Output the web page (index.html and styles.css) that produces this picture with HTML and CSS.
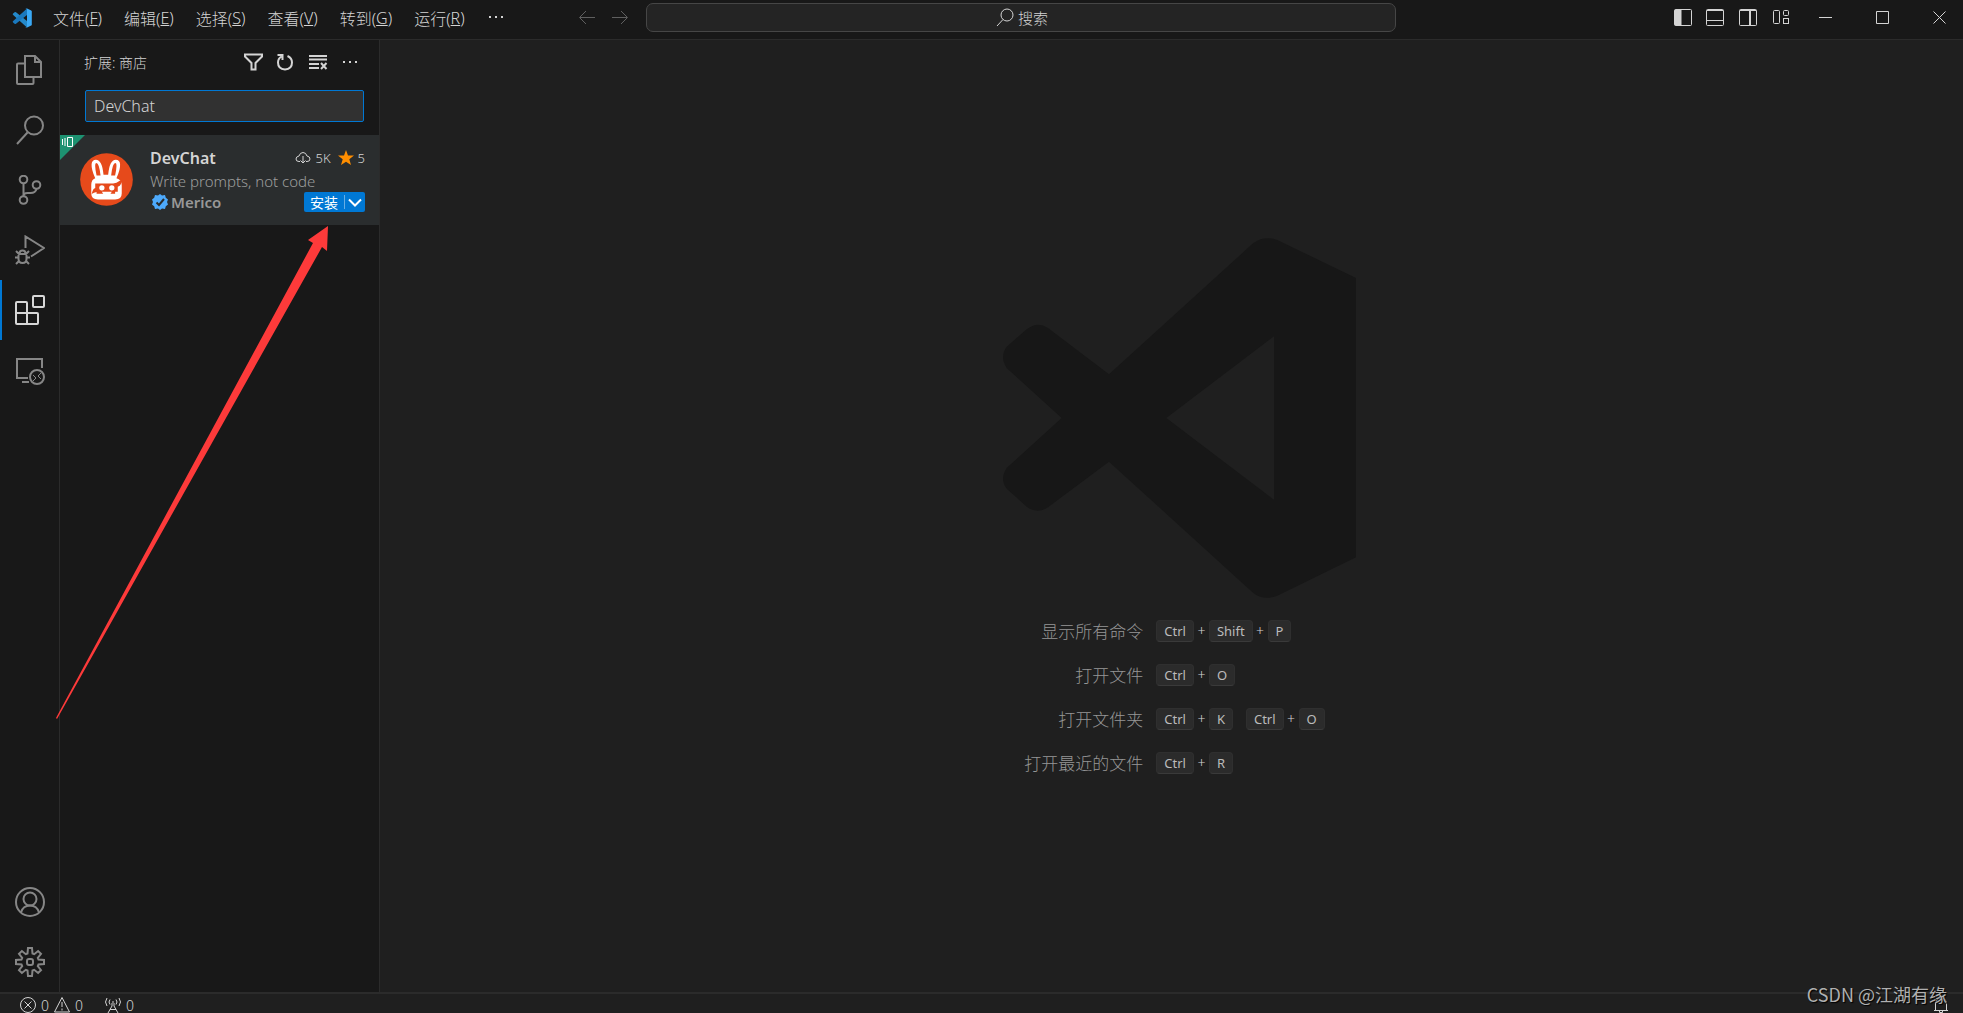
FILE: index.html
```html
<!DOCTYPE html>
<html lang="zh-CN">
<head>
    <meta charset="UTF-8">
    <meta name="viewport" content="width=device-width, initial-scale=1.0">
    <title>Visual Studio Code</title>
    <link rel="stylesheet" href="styles.css">
</head>
<body>
    <header class="titlebar">
        <div class="titlebar-left">
            <svg class="app-logo" width="20" height="20" viewBox="0 0 20 20">
                <path fill="#2489ca" d="M1.4 5.2 2.6 4.2q.7-.5 1.4 0L15 13v6.6L.9 6.8q-.6-.8.5-1.6z"/>
                <path fill="#1a78bd" d="M1.4 14.8l1.2 1q.7.5 1.4 0L15 7V.4L.9 13.2q-.6.8.5 1.6z"/>
                <path fill="#3aa9f5" d="M14.6.3 19.2 2.4q.6.3.6.9V16.7q0 .6-.6.9L14.6 19.7q-.8.2-1.4-.5 1.8 1 1.8-1V1.8q0-2-1.8-1Q13.8 0 14.6.3z"/>
            </svg>
            <nav class="menu">
                <button>文件(<u>F</u>)</button>
                <button>编辑(<u>E</u>)</button>
                <button>选择(<u>S</u>)</button>
                <button>查看(<u>V</u>)</button>
                <button>转到(<u>G</u>)</button>
                <button>运行(<u>R</u>)</button>
                <button aria-label="更多">
                    <svg width="20" height="20" viewBox="0 0 20 20"><path d="M2 8h2v2H2zM8 8h2v2H8zM14 8h2v2h-2z"/></svg>
                </button>
            </nav>
        </div>
        <div class="titlebar-center">
            <div class="history">
                <button aria-label="后退"><svg width="20" height="20" viewBox="0 0 20 20"><path d="M18 9.5H3M9 3 2.5 9.500 9 16"/></svg></button>
                <button aria-label="前进"><svg width="20" height="20" viewBox="0 0 20 20"><path d="M3 9.5h15M12 3l6.5 6.5L12 16"/></svg></button>
            </div>
            <button class="command-center">
                <svg width="20" height="20" viewBox="0 0 20 20"><circle cx="13" cy="7" r="6"/><path d="M9 11.5l-6 6.5"/></svg>
                搜索
            </button>
        </div>
        <div class="titlebar-right">
            <div class="layout-actions">
                <button aria-label="切换主侧栏"><svg width="20" height="20" viewBox="0 0 20 20"><rect x="2.5" y="1.5" width="17" height="16" rx="1"/><path fill="currentColor" d="M3 2h6v15H3z"/></svg></button>
                <button aria-label="切换面板"><svg width="20" height="20" viewBox="0 0 20 20"><rect x="1.5" y="1.5" width="17" height="16" rx="1"/><path d="M2 12.5h16M2 2.5h16"/></svg></button>
                <button aria-label="切换辅助侧栏"><svg width="20" height="20" viewBox="0 0 20 20"><rect x="1.5" y="1.5" width="17" height="16" rx="1"/><path d="M11.5 2v15M12.5 2v15M2 2.5h16"/></svg></button>
                <button aria-label="自定义布局"><svg width="20" height="20" viewBox="0 0 20 20"><rect x="2.5" y="2.5" width="6" height="13" rx="1"/><rect x="12.5" y="2.5" width="5" height="5" rx="1"/><rect x="12.5" y="10.5" width="5" height="5"/></svg></button>
            </div>
            <div class="window-controls">
                <button aria-label="最小化"><svg width="14" height="14" viewBox="0 0 14 14"><path d="M0 6.5h13"/></svg></button>
                <button aria-label="最大化"><svg width="14" height="14" viewBox="0 0 14 14"><path d="M.5.5h12v12H.5z"/></svg></button>
                <button aria-label="关闭"><svg width="14" height="14" viewBox="0 0 14 14"><path d="M.5.5l12 12M12.5.5l-12 12"/></svg></button>
            </div>
        </div>
    </header>

    <div class="workbench">
        <nav class="activitybar">
            <button aria-label="资源管理器"><svg width="30" height="30" viewBox="0 0 30 30"><path d="M10 1h10l6 6v15H10zM20 1v6h6M10 8.5H3q-1 0-1 1V28q0 1 1 1h14.5q1 0 1-1v-6"/></svg></button>
            <button aria-label="搜索"><svg width="30" height="30" viewBox="0 0 30 30"><circle cx="19" cy="10.5" r="9"/><path d="M12.5 17.5 2 29"/></svg></button>
            <button aria-label="源代码管理"><svg width="30" height="30" viewBox="0 0 30 30"><circle cx="8.5" cy="4.5" r="3.8"/><circle cx="21.5" cy="10" r="3.8"/><circle cx="8.5" cy="25" r="3.8"/><path d="M8.5 8.5v12.5M21.5 14q-1 4-6 4h-3q-4 0-4 3"/></svg></button>
            <button aria-label="运行和调试"><svg width="30" height="30" viewBox="0 0 30 30"><path d="M10.5 13V1.5L29 13 16 21.5M3.5 19h8M4.5 18.5q0-3 3-3t3 3M3.5 20v4q0 4 4 4t4-4v-4M1 16l3 3M14 16l-3 3M0 22.5h3.5M11.5 22.5H15M1 29l3-3M14 29l-3-3"/></svg></button>
            <button class="active" aria-label="扩展"><svg width="30" height="30" viewBox="0 0 30 30"><path d="M2 7h9q1 0 1 1v10h10q1 0 1 1v9q0 1-1 1H2q-1 0-1-1V8q0-1 1-1zM1 18h11v11"/><rect x="18" y="1" width="11" height="11" rx="1"/></svg></button>
            <button aria-label="远程资源管理器"><svg width="30" height="30" viewBox="0 0 30 30"><path d="M27 13V4H2v19h11M7 27h7"/><circle cx="22" cy="22" r="7"/><path class="thin" d="M18 20l3 3-3 3M26 18l-3 3 3 3"/></svg></button>
            <div class="spacer"></div>
            <button aria-label="账户"><svg width="30" height="30" viewBox="0 0 30 30"><circle cx="15" cy="15" r="14"/><circle cx="15" cy="12" r="6.5"/><path d="M6 25.5q2-7 9-7t9 7"/></svg></button>
            <button aria-label="管理"><svg width="30" height="30" viewBox="0 0 30 30"><path d="M12.5 6.5 13 1H17L17.5 6.5 19.2 7.2 23.1 4 26 6.9 22.8 10.8 23.5 12.5 29 13V17L23.5 17.5 22.8 19.2 26 23.1 23.1 26 19.2 22.8 17.5 23.5 17 29H13L12.5 23.5 10.8 22.8 6.9 26 4 23.1 7.2 19.2 6.5 17.5 1 17V13L6.5 12.5 7.2 10.8 4 6.9 6.9 4 10.8 7.2z"/><rect x="12" y="12" width="6" height="6" rx="2"/></svg></button>
        </nav>

        <aside class="sidebar">
            <div class="sidebar-header">
                <h2>扩展: 商店</h2>
                <div class="sidebar-actions">
                    <button aria-label="筛选器"><svg width="20" height="20" viewBox="0 0 20 20"><path d="M1 2.5h17v2L11.5 11v6.500h-4V11L1 4.5z"/></svg></button>
                    <button aria-label="刷新"><svg width="20" height="20" viewBox="0 0 20 20"><path d="M5.5 4.5Q2 6.5 2 10.5q0 6.500 7 7 7-.5 7-7 0-4.500-4.500-6.500M1.5 3h5v5"/></svg></button>
                    <button aria-label="清除"><svg width="20" height="20" viewBox="0 0 20 20"><path d="M1 4h18M1 7.5h18M1 12h10M1 16h10M13 11l5.500 6M18.5 11 13 17"/></svg></button>
                    <button aria-label="更多操作"><svg width="20" height="20" viewBox="0 0 20 20"><path class="solid" d="M3 9h2v2H3zM9 9h2v2H9zM15 9h2v2h-2z"/></svg></button>
                </div>
            </div>
            <input class="extension-search" type="text" value="DevChat" aria-label="在应用商店中搜索扩展">

            <article class="extension">
                <div class="extension-badge">
                    <svg width="12" height="12" viewBox="0 0 12 12"><path d="M.5 3v6M3 2v8M5.5 1.5h5v9h-5z"/></svg>
                </div>
                <svg class="extension-icon" width="53" height="53" viewBox="0 0 160 160">
                    <circle cx="80" cy="80" r="79.5" fill="#e64a1b"/>
                    <path fill="#fff" d="M46 76Q34 50 35 34q1-14 13-14 19 0 23 46h14q4-46 23-46 12 0 13 14 1 16-11 42 16 4 16 22v24q0 18-20 18H54q-20 0-20-18V96q0-16 12-20z"/>
                    <path fill="#e64a1b" d="M50 68Q42 30 49 30q9 0 13 38zM94 68q4-38 13-38 7 0-1 38zM46 92h54q10 0 20-8l7-3-3 12q-3 7-10 9v15h-8v6H50v-5q-8 1-15 6l3-9q2-7 8-9z"/>
                    <circle cx="66" cy="105" r="8" fill="#fff"/>
                    <circle cx="96" cy="105" r="8" fill="#fff"/>
                    <path fill="#fff" d="M66 117h30l-4 7H70z"/>
                </svg>
                <div class="extension-details">
                    <div class="extension-row">
                        <h3>DevChat</h3>
                        <div class="extension-stats">
                            <svg width="16" height="16" viewBox="0 0 16 16"><path d="M5 11.5H4q-3 0-3-2.5 0-2.500 3-3 1-3.500 4-3.500t4 3.500q3 .5 3 3 0 2.500-3 2.500h-1M8 6v7M5.5 10.5 8 13l2.500-2.500"/></svg>
                            <span>5K</span>
                            <svg width="16" height="16" viewBox="0 0 16 16"><path class="star" d="M8 0l2 5.500h6l-4.700 3.800L13 15 8 11.700 3 15l1.700-5.700L0 5.500h6z"/></svg>
                            <span>5</span>
                        </div>
                    </div>
                    <p>Write prompts, not code</p>
                    <div class="extension-row">
                        <div class="publisher">
                            <svg width="18" height="18" viewBox="0 0 18 18"><path fill="#4daafc" d="M9 1l2 1.500 3-.5.8 2.700L17 6.500 16 9l1 2.500-2.200 1.800L14 16l-3-.5L9 17l-2-1.500L4 16l-.8-2.700L1 11.500 2 9 1 6.500l2.200-1.800L4 2l3 .5z"/><path fill="none" stroke="#2a2d2e" stroke-width="2" d="M5.5 9.5 8 12l5-6"/></svg>
                            <span>Merico</span>
                        </div>
                        <div class="install">
                            <button>安装</button>
                            <button class="install-more" aria-label="更多安装选项"><svg width="14" height="14" viewBox="0 0 14 14"><path d="M1 4.5l6 6 6-6"/></svg></button>
                        </div>
                    </div>
                </div>
            </article>
        </aside>

        <main class="editor">
            <svg class="letterpress" width="384" height="360" viewBox="0 84 1152 1080">
                <path fill="#171717" fill-rule="evenodd" d="M819 100Q850 75 892 90L1128 204V1042L892 1157Q850 1173 819 1148L387 755 204 892Q172 914 140 890L80 836Q58 808 80 774L245 624 80 474Q58 440 80 410L140 358Q172 332 204 354L387 493zM559 624 882 869V379z"/>
            </svg>
            <dl class="shortcuts">
                <dt>显示所有命令</dt>
                <dd><kbd>Ctrl</kbd><span>+</span><kbd>Shift</kbd><span>+</span><kbd>P</kbd></dd>
                <dt>打开文件</dt>
                <dd><kbd>Ctrl</kbd><span>+</span><kbd>O</kbd></dd>
                <dt>打开文件夹</dt>
                <dd><kbd>Ctrl</kbd><span>+</span><kbd>K</kbd><kbd class="chord">Ctrl</kbd><span>+</span><kbd>O</kbd></dd>
                <dt>打开最近的文件</dt>
                <dd><kbd>Ctrl</kbd><span>+</span><kbd>R</kbd></dd>
            </dl>
        </main>
    </div>

    <footer class="statusbar">
        <button class="problems">
            <svg width="18" height="18" viewBox="0 0 18 18"><circle cx="9" cy="9" r="7.5"/><path d="M5.5 5.5l7 7M12.5 5.5l-7 7"/></svg>
            0
            <svg width="18" height="18" viewBox="0 0 18 18"><path d="M9 1.5l7.5 14.5h-15zM9 6v5M9 12.5v2"/></svg>
            0
        </button>
        <button class="ports">
            <svg width="18" height="18" viewBox="0 0 18 18"><path d="M3 2q-3 4 0 8M6 3.5q-2 2.500 0 5M15 2q3 4 0 8M12 3.5q2 2.500 0 5M8 7v3l-4 7M10 7v3l4 7M8 6h2M6 13.5h6"/></svg>
            0
        </button>
        <button class="bell" aria-label="通知">
            <svg width="18" height="18" viewBox="0 0 18 18"><path d="M2 14.5h14M3.5 14V8Q4 2.5 9 2t5.500 6v6M7.5 15v1.500h3V15"/></svg>
        </button>
    </footer>

    <svg class="pointer-arrow" width="276" height="496" viewBox="0 0 276 496">
        <path fill="#fd3a3a" d="M272 1 271 26 266 22 1 494 0 493 257 18 252 15z"/>
    </svg>
    <div class="watermark">CSDN @江湖有缘</div>
</body>
</html>
```
FILE: styles.css
```css
* {
    box-sizing: border-box;
}

body {
    margin: 0;
    height: 100vh;
    display: flex;
    flex-direction: column;
    overflow: hidden;
    background-color: #181818;
    color: #d4d4d4;
    font-family: "Noto Sans", "Noto Sans CJK SC", sans-serif;
    font-size: 16px;
    font-weight: 300;
}

button {
    display: flex;
    align-items: center;
    justify-content: center;
    padding: 0;
    border: none;
    background: none;
    color: inherit;
    font: inherit;
    cursor: pointer;
}

svg {
    flex-shrink: 0;
}

button svg {
    fill: none;
    stroke: currentColor;
}

h2, h3, p, dl, dd {
    margin: 0;
}

/* Title bar */
.titlebar {
    display: flex;
    flex: 0 0 40px;
    border-bottom: 1px solid #2b2b2b;
}

.titlebar-left,
.titlebar-right {
    flex: 1 1 0;
    display: flex;
    align-items: center;
    min-width: 0;
    padding-bottom: 4px;
}

.titlebar-right {
    justify-content: flex-end;
}

.app-logo {
    margin: 0 10px 0 12px;
}

.menu {
    display: flex;
}

.menu button {
    height: 32px;
    padding: 0 11px;
}

.menu svg {
    fill: currentColor;
    stroke: none;
}

.titlebar-center {
    display: flex;
    align-items: center;
    padding-bottom: 4px;
}

.history {
    display: flex;
    padding: 0 11px 0 4px;
    color: #5f5f5f;
}

.history button {
    width: 32px;
}

.command-center {
    width: 40vw;
    max-width: 750px;
    height: 29px;
    gap: 4px;
    border: 1px solid #464646;
    border-radius: 7px;
    background-color: #242424;
    font-size: 15px;
}

.layout-actions {
    display: flex;
    gap: 1px;
}

.layout-actions button {
    width: 32px;
}

.window-controls {
    display: flex;
    margin-right: -5px;
}

.window-controls button {
    width: 57px;
    height: 32px;
}

/* Workbench */
.workbench {
    display: flex;
    flex: 1;
    min-height: 0;
}

.activitybar {
    display: flex;
    flex-direction: column;
    width: 60px;
    border-right: 1px solid #2b2b2b;
    color: #868686;
}

.activitybar button {
    height: 60px;
    border-left: 2px solid transparent;
    border-right: 2px solid transparent;
}

.activitybar svg {
    stroke-width: 2;
}

.activitybar .thin {
    stroke-width: 1;
}

.activitybar .active {
    border-left-color: #0078d4;
    color: #d7d7d7;
}

.spacer {
    flex: 1;
}

.sidebar {
    width: 320px;
    border-right: 1px solid #2b2b2b;
}

.sidebar-header {
    display: flex;
    align-items: center;
    justify-content: space-between;
    height: 44px;
    padding: 0 13px 0 24px;
}

.sidebar-header h2 {
    font-size: 14px;
    font-weight: 300;
}

.sidebar-actions {
    display: flex;
}

.sidebar-actions button {
    width: 32px;
}

.sidebar-actions svg {
    stroke-width: 2;
}

.sidebar-actions .solid {
    fill: currentColor;
    stroke: none;
}

.extension-search {
    display: block;
    width: 279px;
    height: 32px;
    margin: 6px 15px 13px 25px;
    padding: 0 8px;
    border: 1px solid #0078d4;
    border-radius: 2px;
    outline: none;
    background-color: #313131;
    color: #d4d4d4;
    font: inherit;
}

.extension {
    position: relative;
    display: flex;
    align-items: center;
    gap: 17px;
    height: 90px;
    padding: 0 14px 2px 20px;
    background-color: #2a2d2e;
}

.extension-badge {
    position: absolute;
    top: 0;
    left: 0;
    width: 25px;
    height: 25px;
    padding: 1px 2px;
    background-color: #1d9271;
    clip-path: polygon(0 0, 100% 0, 0 100%);
}

.extension-badge svg {
    display: block;
    fill: none;
    stroke: #ffffff;
}

.extension-details {
    flex: 1;
    min-width: 0;
}

.extension-row {
    display: flex;
    align-items: center;
    justify-content: space-between;
}

.extension h3 {
    font-size: 16px;
    font-weight: 600;
    line-height: 24px;
}

.extension p {
    color: #9d9d9d;
    font-size: 15px;
    line-height: 22px;
}

.extension-stats {
    display: flex;
    align-items: center;
    gap: 4px;
    font-size: 13px;
}

.extension-stats svg {
    fill: none;
    stroke: currentColor;
}

.extension-stats span + svg {
    margin-left: 3px;
}

.extension-stats .star {
    fill: #ff8e00;
    stroke: none;
}

.publisher {
    display: flex;
    align-items: center;
    gap: 2px;
    padding-left: 1px;
    color: #989898;
    font-size: 15px;
    font-weight: 600;
    line-height: 20px;
}

.install {
    display: flex;
    align-items: center;
    height: 20px;
    border-radius: 2px;
    background-color: #0078d4;
    color: #ffffff;
    font-size: 14px;
    font-weight: 400;
}

.install button {
    height: 14px;
    padding: 0 6px;
}

.install .install-more {
    padding: 0 3px;
    border-left: 1px solid #66aee5;
}

.install-more svg {
    stroke-width: 2;
}

/* Empty editor */
.editor {
    flex: 1;
    display: flex;
    flex-direction: column;
    align-items: center;
    justify-content: center;
    gap: 11px;
    padding-bottom: 10px;
    background-color: #1f1f1f;
}

.shortcuts {
    display: grid;
    grid-template-columns: auto auto;
    grid-auto-rows: 44px;
    column-gap: 13px;
    align-items: center;
    padding-left: 6px;
}

.shortcuts dt {
    color: #969696;
    font-size: 17px;
    text-align: right;
}

.shortcuts dd {
    display: flex;
    align-items: center;
    font-size: 14px;
}

.shortcuts span {
    width: 15px;
    text-align: center;
}

.shortcuts kbd {
    height: 22px;
    padding: 0 7px;
    border: 1px solid #2f2f2f;
    border-bottom-color: #3a3a3a;
    border-radius: 4px;
    background-color: #2b2b2b;
    color: #bbbbbb;
    font-family: inherit;
    font-size: 13px;
    font-weight: 400;
    line-height: 20px;
}

.shortcuts .chord {
    margin-left: 13px;
}

/* Status bar */
.statusbar {
    display: flex;
    flex: 0 0 21px;
    align-items: flex-start;
    margin-bottom: -1px;
    padding: 2px 13px 0 19px;
    border-top: 2px solid #2b2b2b;
    background-color: #1f1f1f;
    font-size: 14px;
}

.statusbar button {
    height: 18px;
    gap: 4px;
}

.ports {
    margin-left: 21px;
}

.bell {
    margin-left: auto;
}

/* Annotations over the window */
.pointer-arrow {
    position: absolute;
    top: 225px;
    left: 56px;
    pointer-events: none;
}

.watermark {
    position: absolute;
    right: 16px;
    bottom: 6px;
    color: #b0b0b0;
    font-family: "Noto Sans CJK SC", sans-serif;
    font-size: 18px;
    font-weight: 400;
    line-height: 26px;
    text-shadow: 1px 1px 1px #000000;
    pointer-events: none;
}
```
